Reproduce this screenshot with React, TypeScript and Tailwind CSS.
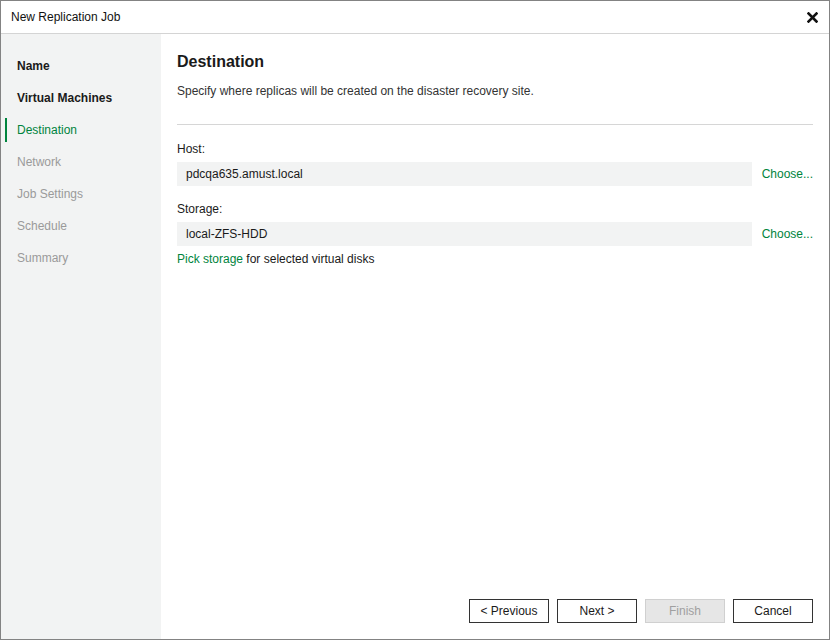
import React from "react";

const steps = [
  { label: "Name", state: "done" },
  { label: "Virtual Machines", state: "done" },
  { label: "Destination", state: "active" },
  { label: "Network", state: "todo" },
  { label: "Job Settings", state: "todo" },
  { label: "Schedule", state: "todo" },
  { label: "Summary", state: "todo" },
];

function Field({ label, value }: { label: string; value: string }) {
  return (
    <div className="flex flex-col">
      <div className="h-[20px] leading-[20px] text-[#1a1a1a]">{label}</div>
      <div className="flex items-center mt-[3px] h-[24px]">
        <div className="flex-1 h-[24px] bg-[#f2f3f3] pl-[9px] leading-[24px] text-[#1a1a1a]">{value}</div>
        <button className="ml-[10px] text-[#00843d] leading-[24px]">Choose...</button>
      </div>
    </div>
  );
}

export default function App() {
  return (
    <div
      className="w-[830px] h-[640px] border border-[#838383] bg-white flex flex-col text-[12px] text-[#1a1a1a]"
      style={{ fontFamily: '"Liberation Sans", Arial, sans-serif' }}
    >
      {/* Title bar */}
      <div className="h-[33px] shrink-0 border-b border-[#d4d4d4] flex items-center justify-between pl-[10px] pr-[11px]">
        <span className="text-[12px] text-[#111]">New Replication Job</span>
        <svg width="11" height="11" viewBox="0 0 11 11">
          <path d="M1.5 1.5 L9.5 9.5 M9.5 1.5 L1.5 9.5" stroke="#111" strokeWidth="2.6" strokeLinecap="square" />
        </svg>
      </div>

      <div className="flex flex-1 min-h-0">
        {/* Sidebar */}
        <div className="w-[160px] shrink-0 bg-[#f2f3f3] pt-[16px]">
          {steps.map((s) => (
            <div key={s.label} className="relative h-[32px] flex items-center pl-[16px]">
              {s.state === "active" && (
                <div className="absolute left-[4px] top-[4px] w-[2px] h-[24px] bg-[#00843d]" />
              )}
              <span
                className={
                  s.state === "done"
                    ? "font-bold text-[#1a1a1a]"
                    : s.state === "active"
                    ? "text-[#00843d]"
                    : "text-[#9a9a9a]"
                }
              >
                {s.label}
              </span>
            </div>
          ))}
        </div>

        {/* Main */}
        <div className="flex-1 flex flex-col pl-[16px] pr-[16px] pt-[17px] pb-[16px]">
          <div className="text-[16px] font-bold h-[22px] leading-[22px] text-[#1a1a1a]">Destination</div>
          <div className="mt-[9px] h-[18px] leading-[18px] text-[#333]">
            Specify where replicas will be created on the disaster recovery site.
          </div>
          <div className="mt-[24px] h-px bg-[#d6d6d6]" />
          <div className="mt-[14px] flex flex-col gap-[13px]">
            <Field label="Host:" value="pdcqa635.amust.local" />
            <Field label="Storage:" value="local-ZFS-HDD" />
          </div>
          <div className="mt-[3px] h-[20px] leading-[20px]">
            <span className="text-[#00843d]">Pick storage</span> for selected virtual disks
          </div>

          <div className="flex-1" />

          <div className="flex justify-end gap-[8px]">
            <button className="w-[80px] h-[24px] border border-[#333] bg-white">&lt; Previous</button>
            <button className="w-[80px] h-[24px] border border-[#333] bg-white">Next &gt;</button>
            <button className="w-[80px] h-[24px] border border-[#d0d0d0] bg-[#e6e6e6] text-[#a0a0a0]">Finish</button>
            <button className="w-[80px] h-[24px] border border-[#333] bg-white">Cancel</button>
          </div>
        </div>
      </div>
    </div>
  );
}
